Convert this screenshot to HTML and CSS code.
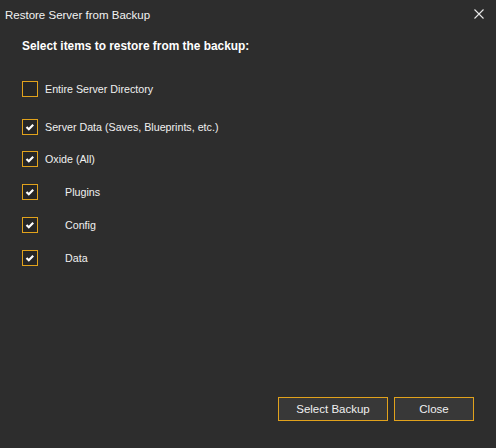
FILE: index.html
```html
<!DOCTYPE html>
<html>
<head>
<meta charset="utf-8">
<link rel="stylesheet" href="styles.css">
</head>
<body>
<div class="window">
  <div class="titlebar">
    <span class="title">Restore Server from Backup</span>
    <svg class="close-x" width="10" height="10" viewBox="0 0 10 10"><path d="M0.5 0.5 L9.5 9.5 M9.5 0.5 L0.5 9.5" stroke="#e8e8e8" stroke-width="1.1" fill="none"/></svg>
  </div>
  <div class="content">
    <div class="heading">Select items to restore from the backup:</div>
    <div class="row r1"><span class="box"></span><span class="label">Entire Server Directory</span></div>
    <div class="row r2"><span class="box checked"><svg viewBox="0 0 16 16" width="16" height="16"><path d="M4.5 8 L6.8 10.2 L11.2 5.8" stroke="#fff" stroke-width="2.2" fill="none"/></svg></span><span class="label">Server Data (Saves, Blueprints, etc.)</span></div>
    <div class="row r3"><span class="box checked"><svg viewBox="0 0 16 16" width="16" height="16"><path d="M4.5 8 L6.8 10.2 L11.2 5.8" stroke="#fff" stroke-width="2.2" fill="none"/></svg></span><span class="label">Oxide (All)</span></div>
    <div class="row r4"><span class="box checked"><svg viewBox="0 0 16 16" width="16" height="16"><path d="M4.5 8 L6.8 10.2 L11.2 5.8" stroke="#fff" stroke-width="2.2" fill="none"/></svg></span><span class="label sub">Plugins</span></div>
    <div class="row r4"><span class="box checked"><svg viewBox="0 0 16 16" width="16" height="16"><path d="M4.5 8 L6.8 10.2 L11.2 5.8" stroke="#fff" stroke-width="2.2" fill="none"/></svg></span><span class="label sub">Config</span></div>
    <div class="row r4"><span class="box checked"><svg viewBox="0 0 16 16" width="16" height="16"><path d="M4.5 8 L6.8 10.2 L11.2 5.8" stroke="#fff" stroke-width="2.2" fill="none"/></svg></span><span class="label sub">Data</span></div>
  </div>
  <div class="footer">
    <button class="btn wide">Select Backup</button>
    <button class="btn">Close</button>
  </div>
</div>
</body>
</html>
```

FILE: styles.css
```css
html, body {
  margin: 0;
  padding: 0;
  background: #2d2d2d;
}
.window {
  width: 496px;
  height: 448px;
  display: flex;
  flex-direction: column;
  background: #2d2d2d;
  color: #f0f0f0;
  font-family: "Liberation Sans", Arial, sans-serif;
  box-sizing: border-box;
}
.titlebar {
  height: 30px;
  display: flex;
  align-items: center;
  justify-content: space-between;
  padding: 0 12px 0 5px;
}
.title {
  font-size: 11.5px;
  color: #f2f2f2;
  padding-bottom: 1px;
}
.close-x {
  display: block;
  margin-top: -3px;
}
.content {
  padding: 9px 0 0 22px;
  display: flex;
  flex-direction: column;
}
.heading {
  font-size: 11.9px;
  font-weight: bold;
  color: #ffffff;
  line-height: 14px;
}
.row {
  display: flex;
  align-items: center;
  height: 16px;
}
.r1 { margin-top: 28px; }
.r2 { margin-top: 22px; }
.r3 { margin-top: 16px; }
.r4 { margin-top: 17px; }
.box {
  width: 16px;
  height: 16px;
  box-sizing: border-box;
  border: 1px solid #e1a21c;
  background: #262626;
  position: relative;
  flex: none;
}
.box svg {
  position: absolute;
  left: -1px;
  top: -1px;
}
.label {
  font-size: 10.7px;
  margin-left: 7px;
  color: #f0f0f0;
}
.label.sub {
  margin-left: 27px;
}
.footer {
  margin-top: auto;
  display: flex;
  justify-content: flex-end;
  gap: 6px;
  padding: 0 22px 27px 0;
}
.btn {
  width: 80px;
  height: 24px;
  background: #383838;
  border: 1px solid #e1a21c;
  color: #f0f0f0;
  font-family: "Liberation Sans", Arial, sans-serif;
  font-size: 11.5px;
  padding: 0;
}
.btn.wide {
  width: 110px;
}
```
